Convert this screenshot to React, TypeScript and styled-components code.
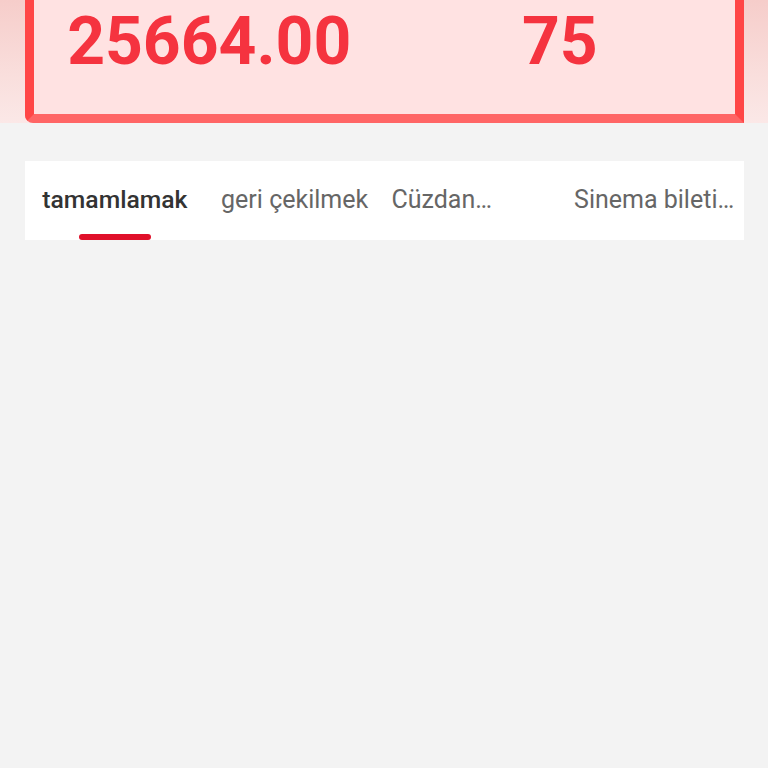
import styled, { createGlobalStyle } from 'styled-components'

const GlobalStyle = createGlobalStyle`
  html, body {
    margin: 0;
    padding: 0;
    background: #f3f3f3;
    font-family: Roboto, "Noto Sans", "Liberation Sans", sans-serif;
  }
`

const Page = styled.div`
  min-height: 768px;
  background: #f3f3f3;
`

const Header = styled.header`
  background: linear-gradient(180deg, #f6cdca 0%, #f9dedc 60%, #fbe8e7 100%);
  padding: 0 24px 0 25px;
`

const StatsCard = styled.div`
  display: grid;
  grid-template-columns: 1fr 1fr;
  height: 123px;
  padding-top: 9px;
  box-sizing: border-box;
  background: #ffe2e2;
  border: 9px solid #ff4646;
  border-top: none;
  border-bottom-color: #ff6565;
  border-radius: 0 0 0 8px;
`

const StatValue = styled.div`
  text-align: center;
  font-size: 66px;
  line-height: 66px;
  font-weight: 700;
  color: #f5333f;
`

const TabBar = styled.nav`
  display: grid;
  grid-template-columns: repeat(4, 1fr);
  margin: 38px 24px 0 25px;
  height: 79px;
  background: #ffffff;
`

const Tab = styled.div<{ $left?: boolean }>`
  display: flex;
  flex-direction: column;
  align-items: ${p => (p.$left ? 'flex-start' : 'center')};
  padding: 26px 0 0 ${p => (p.$left ? '7px' : '0')};
  box-sizing: border-box;
  height: 79px;
`

const TabLabel = styled.span<{ $active?: boolean }>`
  font-size: ${p => (p.$active ? '24.7px' : '25px')};
  line-height: 25px;
  white-space: nowrap;
  font-weight: ${p => (p.$active ? 500 : 400)};
  color: ${p => (p.$active ? '#333333' : '#666666')};
`

const Indicator = styled.span`
  margin-top: auto;
  align-self: center;
  width: 72px;
  height: 6px;
  border-radius: 3px;
  background: #e0102a;
`

const tabs = [
  { label: 'tamamlamak', active: true },
  { label: 'geri çekilmek' },
  { label: 'Cüzdan…', left: true },
  { label: 'Sinema bileti…' },
]

export default function App() {
  return (
    <Page>
      <GlobalStyle />
      <Header>
        <StatsCard>
          <StatValue>25664.00</StatValue>
          <StatValue>75</StatValue>
        </StatsCard>
      </Header>
      <TabBar>
        {tabs.map(tab => (
          <Tab key={tab.label} $left={tab.left}>
            <TabLabel $active={tab.active}>{tab.label}</TabLabel>
            {tab.active && <Indicator />}
          </Tab>
        ))}
      </TabBar>
    </Page>
  )
}
